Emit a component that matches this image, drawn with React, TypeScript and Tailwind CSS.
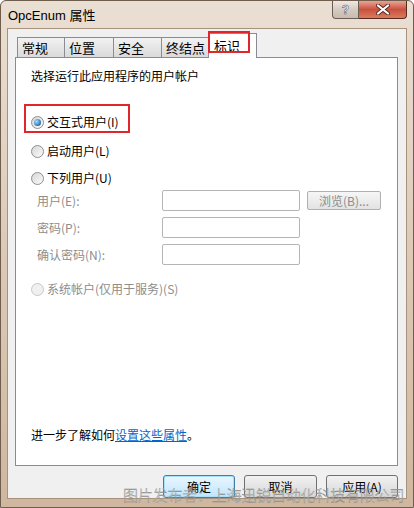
import React from 'react';

const cjk = { fontFamily: '"Noto Sans CJK SC", "Noto Sans", sans-serif' };

function Radio({ checked = false, disabled = false }: { checked?: boolean; disabled?: boolean }) {
  return (
    <span
      className={`relative inline-flex h-[13px] w-[13px] shrink-0 items-center justify-center rounded-full border ${
        disabled ? 'border-[#c8c8c8] bg-[#f0f0f0]' : 'border-[#8e8f8f] bg-gradient-to-br from-[#d6d6d6] to-[#fbfbfb]'
      }`}
    >
      {checked && (
        <span className="h-[7px] w-[7px] rounded-full bg-[radial-gradient(circle_at_35%_35%,#a6e0ff,#2a6fb0_70%,#1b4e86)]" />
      )}
    </span>
  );
}

function Field({ label, browse = false }: { label: string; browse?: boolean }) {
  return (
    <div className="flex h-[27px] items-start">
      <span className="flex h-[21px] w-[131px] items-center pl-[6px] text-[12px] text-[#8d8d8d]">{label}</span>
      <div className="h-[21px] w-[138px] rounded-[2px] border border-[#b5b5b5] bg-white" />
      {browse && (
        <div className="ml-[7px] mt-[1px] flex h-[19px] w-[74px] items-center justify-center rounded-[2px] border border-[#b0b0b0] bg-gradient-to-b from-[#f6f6f6] to-[#e3e3e3] text-[12px] text-[#8d8d8d]">
          浏览(B)...
        </div>
      )}
    </div>
  );
}

function Tab({ label, active = false, w }: { label: string; active?: boolean; w: string }) {
  if (active)
    return (
      <div className={`relative z-10 -mb-px flex h-[25px] ${w} items-start border border-b-0 border-[#898c95] bg-white pl-[5px] pt-[2px] text-[13px] text-black`}>
        {label}
      </div>
    );
  return (
    <div className={`flex h-[20px] ${w} items-center border border-r-0 border-b-0 border-[#898c95] bg-gradient-to-b from-[#f2f2f2] to-[#dadada] pl-[4px] text-[13px] text-black`}>
      {label}
    </div>
  );
}

export default function App() {
  return (
    <div className="relative h-[508px] w-[414px] overflow-hidden" style={cjk}>
      <div className="flex h-full w-full flex-col rounded-t-[6px] border border-[#6f5e4e] bg-gradient-to-b from-[#eadfd3] via-[#dccab7] to-[#cfb79f]">
        {/* title bar */}
        <div className="flex h-[27px] shrink-0 items-start">
          <span className="pl-[7px] pt-[5px] text-[13px] text-black" style={{ fontFamily: '"Liberation Sans", "Noto Sans CJK SC", sans-serif' }}>
            OpcEnum 属性
          </span>
          <div className="ml-auto mr-[6px] flex">
            <div className="flex h-[18px] w-[27px] items-center justify-center rounded-bl-[4px] border border-t-0 border-[#6b5d52] bg-gradient-to-b from-[#efe9e4] via-[#d6cbc1] to-[#c8bbb0]">
              <span className="text-[12px] font-bold text-white [-webkit-text-stroke:0.5px_#555]" style={{ fontFamily: '"Liberation Sans", sans-serif' }}>?</span>
            </div>
            <div className="flex h-[18px] w-[48px] items-center justify-center rounded-br-[4px] border border-l-0 border-t-0 border-[#5a2a22] bg-gradient-to-b from-[#e8a493] via-[#c95040] to-[#d97c5c]">
              <svg width="14" height="11" viewBox="0 0 14 11">
                <path d="M2 1.5 L12 9.5 M12 1.5 L2 9.5" stroke="#5a2a22" strokeWidth="4" strokeLinecap="round" />
                <path d="M2 1.5 L12 9.5 M12 1.5 L2 9.5" stroke="#ffffff" strokeWidth="2.2" strokeLinecap="round" />
              </svg>
            </div>
          </div>
        </div>

        {/* client area */}
        <div className="mx-[6px] mb-[8px] flex flex-1 flex-col border border-[#a8927c] bg-[#f0f0f0] pl-[7px] pr-[8px] pt-[4px]">
          <div className="flex items-end">
            <div className="w-[2px]" />
            <Tab label="常规" w="w-[47px]" />
            <Tab label="位置" w="w-[49px]" />
            <Tab label="安全" w="w-[48px]" />
            <Tab label="终结点" w="w-[47px]" />
            <div className="relative">
              <Tab label="标识" active w="w-[49px]" />
              <div className="pointer-events-none absolute left-0 top-[-2px] z-20 h-[22px] w-[42px] border-[2px] border-[#e0262b]" />
            </div>
          </div>

          <div className="flex h-[409px] flex-col border border-[#898c95] bg-white pl-[15px] pt-[10px] text-[12px] text-black">
            <div className="h-[16px] leading-[16px]">选择运行此应用程序的用户帐户</div>

            <div className="relative mt-[28px] flex h-[20px] items-center gap-[3px]">
              <Radio checked />
              <span>交互式用户(I)</span>
              <div className="pointer-events-none absolute left-[-7px] top-[-8px] h-[29px] w-[106px] border-[2px] border-[#e0262b]" />
            </div>
            <div className="mt-[9px] flex h-[20px] items-center gap-[3px]">
              <Radio />
              <span>启动用户(L)</span>
            </div>
            <div className="mt-[7px] flex h-[20px] items-center gap-[3px]">
              <Radio />
              <span>下列用户(U)</span>
            </div>

            <div className="mt-[2px] flex flex-col">
              <Field label="用户(E):" browse />
              <Field label="密码(P):" />
              <Field label="确认密码(N):" />
            </div>

            <div className="mt-[8px] flex h-[20px] items-center gap-[3px] text-[#8d8d8d]">
              <Radio disabled />
              <span>系统帐户(仅用于服务)(S)</span>
            </div>

            <div className="mt-auto mb-[22px] h-[16px] leading-[16px]">
              进一步了解如何<span className="text-[#0066cc] underline">设置这些属性</span>。
            </div>
          </div>

          <div className="mt-[9px] flex justify-end gap-[9px]">
            <div className="flex h-[23px] w-[72px] items-center justify-center rounded-[3px] border border-[#3c7fb1] bg-gradient-to-b from-[#eaf6fd] to-[#bee6fd] text-[12px] shadow-[inset_0_0_0_1px_#a8e0fb]">
              确定
            </div>
            <div className="flex h-[23px] w-[73px] items-center justify-center rounded-[3px] border border-[#707070] bg-gradient-to-b from-[#f2f2f2] to-[#d6d6d6] text-[12px]">
              取消
            </div>
            <div className="flex h-[23px] w-[72px] items-center justify-center rounded-[3px] border border-[#707070] bg-gradient-to-b from-[#f2f2f2] to-[#d6d6d6] text-[12px]">
              应用(A)
            </div>
          </div>
        </div>
      </div>

      <div className="pointer-events-none absolute left-[123px] top-[486px] text-[15px] font-light leading-[18px] tracking-[-0.2px] text-white/40 [-webkit-text-stroke:0.4px_#8a8a8a]">
        图片发布者：上海迅锐自动化科技有限公司
      </div>
    </div>
  );
}
